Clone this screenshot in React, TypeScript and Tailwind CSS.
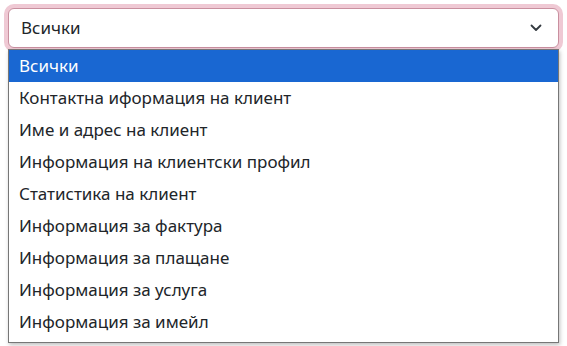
import React from "react";

const options = [
  "Всички",
  "Контактна иформация на клиент",
  "Име и адрес на клиент",
  "Информация на клиентски профил",
  "Статистика на клиент",
  "Информация за фактура",
  "Информация за плащане",
  "Информация за услуга",
  "Информация за имейл",
];

const App: React.FC = () => {
  return (
    <div
      className="w-[567px] h-[346px] bg-white p-2 text-[17px] text-[#212529]"
      style={{ fontFamily: '"Noto Sans", "Open Sans", sans-serif' }}
    >
      <div className="flex h-10 items-center justify-between rounded-md border border-[#c98f9f] bg-white pl-3 pr-4 shadow-[0_0_0_4px_#efc9d4]">
        <span>Всички</span>
        <svg width="12" height="8" viewBox="0 0 12 8" fill="none">
          <path d="M1.5 1.5 6 6l4.5-4.5" stroke="#343a40" strokeWidth="1.8" strokeLinecap="round" strokeLinejoin="round" />
        </svg>
      </div>
      <ul className="mt-px flex flex-col border border-[#767676] bg-white pb-1 shadow-[1px_2px_4px_rgba(0,0,0,0.25)]">
        {options.map((opt, i) => (
          <li
            key={opt}
            className={`flex h-8 items-center px-[10px] ${
              i === 0 ? "bg-[#1967d2] text-white" : "text-[#212529]"
            }`}
          >
            {opt}
          </li>
        ))}
      </ul>
    </div>
  );
};

export default App;
